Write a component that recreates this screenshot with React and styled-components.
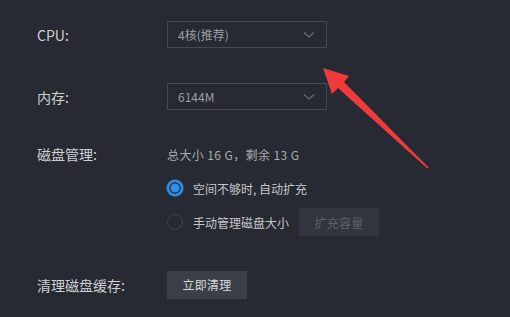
import React from 'react';
import styled, { createGlobalStyle } from 'styled-components';

const GlobalStyle = createGlobalStyle`
  html, body {
    margin: 0;
    padding: 0;
    background: #272a32;
  }
  body {
    font-family: "Noto Sans CJK SC", "Noto Sans", sans-serif;
  }
`;

const Page = styled.div`
  position: relative;
  width: 510px;
  height: 317px;
  overflow: hidden;
  background: #272a32;
  box-sizing: border-box;
  padding: 21px 0 0 37px;
`;

const Row = styled.div`
  display: flex;
  align-items: center;
  height: ${props => props.h || 27}px;
  margin-top: ${props => props.mt || 0}px;
`;

const Label = styled.div`
  width: 130px;
  flex-shrink: 0;
  font-size: 14px;
  color: #cfd0d3;
`;

const Select = styled.div`
  width: 160px;
  height: 27px;
  box-sizing: border-box;
  border: 1px solid #464850;
  display: flex;
  align-items: center;
  justify-content: space-between;
  padding: 0 11px 0 10px;
  font-size: 12px;
  color: #9c9ea4;
`;

const Info = styled.div`
  font-size: 12px;
  letter-spacing: 0.4px;
  color: #a9abb0;
`;

const Options = styled.div`
  display: flex;
  flex-direction: column;
  padding-left: 130px;
`;

const Radio = styled.span`
  width: 16px;
  height: 16px;
  box-sizing: border-box;
  border-radius: 50%;
  margin: 0 10px 0 0;
  border: ${props => (props.checked ? '2px solid #3a8fe0' : '1px solid #41444c')};
  background: ${props => (props.checked ? '#2f90ef' : 'transparent')};
  box-shadow: ${props => (props.checked ? 'inset 0 0 0 1.5px #262a33, 0 0 0 1px #1f5d98' : 'none')};
`;

const OptionText = styled.span`
  font-size: 12px;
  color: #c5c6ca;
`;

const Button = styled.div`
  width: 80px;
  height: 28px;
  display: flex;
  align-items: center;
  justify-content: center;
  margin-left: ${props => props.ml || 0}px;
  font-size: 12px;
  letter-spacing: 0.3px;
  background: ${props => (props.disabled ? '#32353e' : '#3c3f48')};
  color: ${props => (props.disabled ? '#5e616a' : '#d7d8db')};
`;

const Arrow = styled.svg`
  position: absolute;
  left: 0;
  top: 0;
  pointer-events: none;
`;

const Chevron = () => (
  <svg width="12" height="8" viewBox="0 0 12 8">
    <path d="M1 1.5 L6 6 L11 1.5" fill="none" stroke="#6b6e76" strokeWidth="1.2" />
  </svg>
);

const App = () => (
  <>
    <GlobalStyle />
    <Page>
      <Row>
        <Label>CPU:</Label>
        <Select>
          <span>4核(推荐)</span>
          <Chevron />
        </Select>
      </Row>
      <Row mt={35}>
        <Label>内存:</Label>
        <Select>
          <span>6144M</span>
          <Chevron />
        </Select>
      </Row>
      <Row mt={34} h={20}>
        <Label>磁盘管理:</Label>
        <Info>总大小 16 G，剩余 13 G</Info>
      </Row>
      <Options>
        <Row mt={12} h={24}>
          <Radio checked />
          <OptionText>空间不够时, 自动扩充</OptionText>
        </Row>
        <Row mt={8} h={28}>
          <Radio />
          <OptionText>手动管理磁盘大小</OptionText>
          <Button disabled ml={10}>扩充容量</Button>
        </Row>
      </Options>
      <Row mt={35}>
        <Label>清理磁盘缓存:</Label>
        <Button>立即清理</Button>
      </Row>
      <Arrow width="510" height="317" viewBox="0 0 510 317">
        <polygon
          points="323,68 349,76 344,82 428.6,167.4 427.4,168.6 338,88 332,94"
          fill="#ef3b3b"
        />
      </Arrow>
    </Page>
  </>
);

export default App;
